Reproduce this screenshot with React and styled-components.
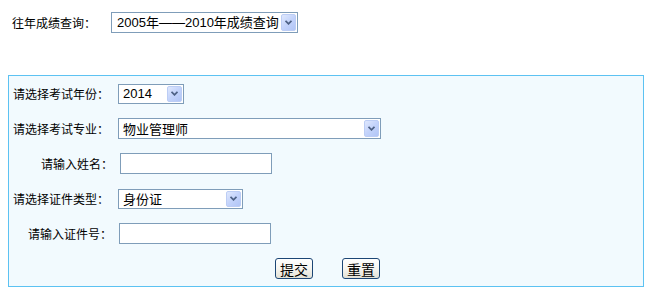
import React from "react";
import styled, { createGlobalStyle } from "styled-components";

const Global = createGlobalStyle`
  html, body { margin: 0; padding: 0; background: #ffffff; }
  body {
    margin: 8px;
    font-family: "Noto Sans CJK SC", "Liberation Sans", sans-serif;
    font-size: 12px;
    color: #000;
  }
`;

const Page = styled.div`
  width: 636px;
`;

const TopRow = styled.div`
  display: flex;
  align-items: center;
  height: 21px;
  margin-top: 4px;
  padding-left: 4px;
`;

const TopLabel = styled.span`
  font-size: 12px;
  line-height: 21px;
  margin-right: 15px;
`;

const SelectBox = styled.div`
  box-sizing: border-box;
  display: flex;
  align-items: center;
  justify-content: space-between;
  width: ${(p) => p.$w}px;
  height: ${(p) => p.$h || 20}px;
  margin-left: ${(p) => p.$ml || 0}px;
  border: 1px solid #7f9db9;
  background: #fff;
  padding: 0 1px 0 ${(p) => p.$pl || 4}px;
`;

const SelectText = styled.span`
  font-family: "Liberation Sans", "Noto Sans CJK SC", sans-serif;
  font-size: 13px;
  line-height: 16px;
  white-space: nowrap;
  color: #000;
`;

const CjkText = styled(SelectText)`
  font-family: "Noto Sans CJK SC", "Liberation Sans", sans-serif;
`;

const ArrowBtn = styled.span`
  box-sizing: border-box;
  display: flex;
  align-items: center;
  justify-content: center;
  width: 15px;
  height: ${(p) => p.$h || 16}px;
  border: 1px solid #bccdf5;
  border-radius: 2px;
  background: linear-gradient(135deg, #dfe8fd 0%, #c3d3fb 50%, #b1c5f6 100%);
`;

const Arrow = ({ h }) => (
  <ArrowBtn $h={h}>
    <svg width="7" height="5" viewBox="0 0 7 5">
      <path d="M0.5 0.8 L3.5 3.8 L6.5 0.8" fill="none" stroke="#4d6185" strokeWidth="1.8" />
    </svg>
  </ArrowBtn>
);

const Panel = styled.div`
  box-sizing: border-box;
  width: 636px;
  margin-top: 42px;
  border: 1px solid #5cc2f2;
  background: #f2fafe;
`;

const Row = styled.div`
  display: flex;
  align-items: center;
  height: 35px;
`;

const Label = styled.span`
  box-sizing: border-box;
  width: 105px;
  text-align: right;
  padding-right: ${(p) => p.$pr}px;
  font-size: 12px;
  white-space: nowrap;
`;

const TextInput = styled.input`
  box-sizing: border-box;
  width: 152px;
  height: ${(p) => p.$h || 21}px;
  margin: 0 0 0 ${(p) => p.$ml}px;
  border: 1px solid #7f9db9;
  background: #fff;
  padding: 0 3px;
  outline: none;
`;

const ButtonRow = styled.div`
  display: flex;
  align-items: center;
  justify-content: center;
  gap: 29px;
  height: 35px;
  padding-left: 3px;
`;

const Button = styled.button`
  box-sizing: border-box;
  width: 38px;
  height: 21px;
  padding: 0;
  border: 1px solid #1c4675;
  border-radius: 3px;
  background: linear-gradient(180deg, #ffffff 0%, #f6f5f0 50%, #e3e1d6 100%);
  font-family: "Noto Sans CJK SC", sans-serif;
  font-size: 14px;
  line-height: 18px;
  color: #000;
  cursor: pointer;
`;

export default function App() {
  return (
    <Page>
      <Global />
      <TopRow>
        <TopLabel>往年成绩查询：</TopLabel>
        <SelectBox $w={187} $h={21} $pl={5}>
          <SelectText>2005年——2010年成绩查询</SelectText>
          <Arrow h={17} />
        </SelectBox>
      </TopRow>

      <Panel>
        <Row>
          <Label $pr={5}>请选择考试年份：</Label>
          <SelectBox $w={66} $h={20} $ml={4}>
            <SelectText>2014</SelectText>
            <Arrow h={16} />
          </SelectBox>
        </Row>
        <Row>
          <Label $pr={5}>请选择考试专业：</Label>
          <SelectBox $w={263} $h={21} $ml={4}>
            <CjkText>物业管理师</CjkText>
            <Arrow h={17} />
          </SelectBox>
        </Row>
        <Row>
          <Label $pr={1}>请输入姓名：</Label>
          <TextInput type="text" $ml={6} />
        </Row>
        <Row>
          <Label $pr={5}>请选择证件类型：</Label>
          <SelectBox $w={125} $h={20} $ml={4}>
            <CjkText>身份证</CjkText>
            <Arrow h={16} />
          </SelectBox>
        </Row>
        <Row>
          <Label $pr={2}>请输入证件号：</Label>
          <TextInput type="text" $ml={5} />
        </Row>
        <ButtonRow>
          <Button type="button">提交</Button>
          <Button type="button">重置</Button>
        </ButtonRow>
      </Panel>
    </Page>
  );
}
